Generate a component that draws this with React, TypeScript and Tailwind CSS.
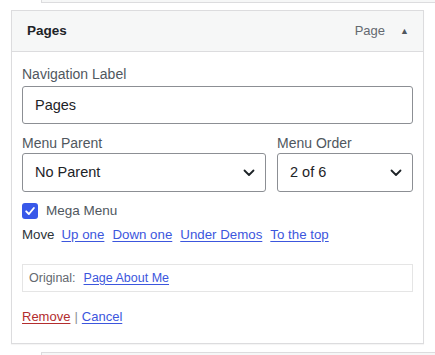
import { useState } from 'react';

function Chevron() {
    return (
        <svg width="12" height="8" viewBox="0 0 12 8" fill="none" className="shrink-0">
            <path d="M1.5 1.5 L6 6 L10.5 1.5" stroke="#1d2327" strokeWidth="1.8" strokeLinecap="round" strokeLinejoin="round" />
        </svg>
    );
}

export default function App() {
    const [label, setLabel] = useState('Pages');
    const [mega, setMega] = useState(true);

    return (
        <div className="min-h-[355px] bg-white" style={{ fontFamily: '"Liberation Sans", Arial, sans-serif' }}>
            {/* previous menu item (cut off) */}
            <div className="ml-[41px] h-[3px] border-l border-b border-[#dcdcde] bg-[#f6f7f7]" />

            <div className="ml-[11px] mt-[7px] w-[413px] border border-[#dcdcde] bg-white shadow-[0_1px_1px_rgba(0,0,0,0.04)]">
                {/* header */}
                <div className="flex h-[41px] items-center border-b border-[#dcdcde] bg-[#f6f7f7] pl-[15px] pr-[14px]">
                    <span className="text-[13.5px] font-bold text-[#1d2327]">Pages</span>
                    <span className="ml-auto text-[13px] text-[#646970]">Page</span>
                    <span className="ml-[15px] text-[9px] leading-none text-[#50575e]">▲</span>
                </div>

                {/* settings */}
                <div className="px-[10px] pt-[12px] pb-[16px]">
                    <label className="block text-[14px] leading-[20px] text-[#50575e]">Navigation Label</label>
                    <input
                        value={label}
                        onChange={(e) => setLabel(e.target.value)}
                        className="mt-[2px] h-[38px] w-full rounded-[3px] border border-[#8c8f94] px-[12px] text-[14.5px] text-[#1d2327] outline-none"
                    />

                    <div className="mt-[9px] grid grid-cols-[244px_1fr] gap-x-[11px]">
                        <div>
                            <div className="text-[14px] leading-[20px] text-[#50575e]">Menu Parent</div>
                            <div className="flex h-[39px] items-center rounded-[3px] border border-[#8c8f94] pl-[12px] pr-[10px]">
                                <span className="text-[14.5px] text-[#1d2327]">No Parent</span>
                                <span className="ml-auto">
                                    <Chevron />
                                </span>
                            </div>
                        </div>
                        <div>
                            <div className="text-[14px] leading-[20px] text-[#50575e]">Menu Order</div>
                            <div className="flex h-[39px] items-center rounded-[3px] border border-[#8c8f94] pl-[12px] pr-[10px]">
                                <span className="text-[14.5px] text-[#1d2327]">2 of 6</span>
                                <span className="ml-auto">
                                    <Chevron />
                                </span>
                            </div>
                        </div>
                    </div>

                    <label className="mt-[11px] flex h-[16px] cursor-pointer items-center gap-[8px]" onClick={() => setMega(!mega)}>
                        <span
                            className={`flex h-[16px] w-[16px] items-center justify-center rounded-[3px] ${
                                mega ? 'bg-[#3858e9]' : 'border border-[#8c8f94] bg-white'
                            }`}
                        >
                            {mega && (
                                <svg width="12" height="12" viewBox="0 0 12 12" fill="none">
                                    <path d="M2.2 6.3 L4.9 9 L9.9 3" stroke="white" strokeWidth="1.9" strokeLinecap="round" strokeLinejoin="round" />
                                </svg>
                            )}
                        </span>
                        <span className="text-[13.5px] text-[#50575e]">Mega Menu</span>
                    </label>

                    <div className="mt-[6px] flex items-center text-[13.3px] leading-[20px]">
                        <span className="mr-[7px] text-[#2c3338]">Move</span>
                        {['Up one', 'Down one', 'Under Demos', 'To the top'].map((t) => (
                            <a key={t} href="#" className="mr-[8px] text-[#3c56dd] underline underline-offset-2">
                                {t}
                            </a>
                        ))}
                    </div>

                    <div className="mt-[19px] flex h-[28px] items-center border border-[#e5e5e5] px-[6px] text-[12.5px]">
                        <span className="text-[#646970]">Original:</span>
                        <a href="#" className="ml-[8px] text-[#3c56dd] underline underline-offset-2">
                            Page About Me
                        </a>
                    </div>

                    <div className="mt-[15px] text-[13px] leading-[20px]">
                        <a href="#" className="text-[#b32d2e] underline underline-offset-2">
                            Remove
                        </a>
                        <span className="mx-[4px] text-[#8c8f94]">|</span>
                        <a href="#" className="text-[#3c56dd] underline underline-offset-2">
                            Cancel
                        </a>
                    </div>
                </div>
            </div>

            {/* next menu item (cut off) */}
            <div className="ml-[41px] mt-[8px] h-[10px] border-l border-t border-[#dcdcde] bg-[#f6f7f7]" />
        </div>
    );
}
